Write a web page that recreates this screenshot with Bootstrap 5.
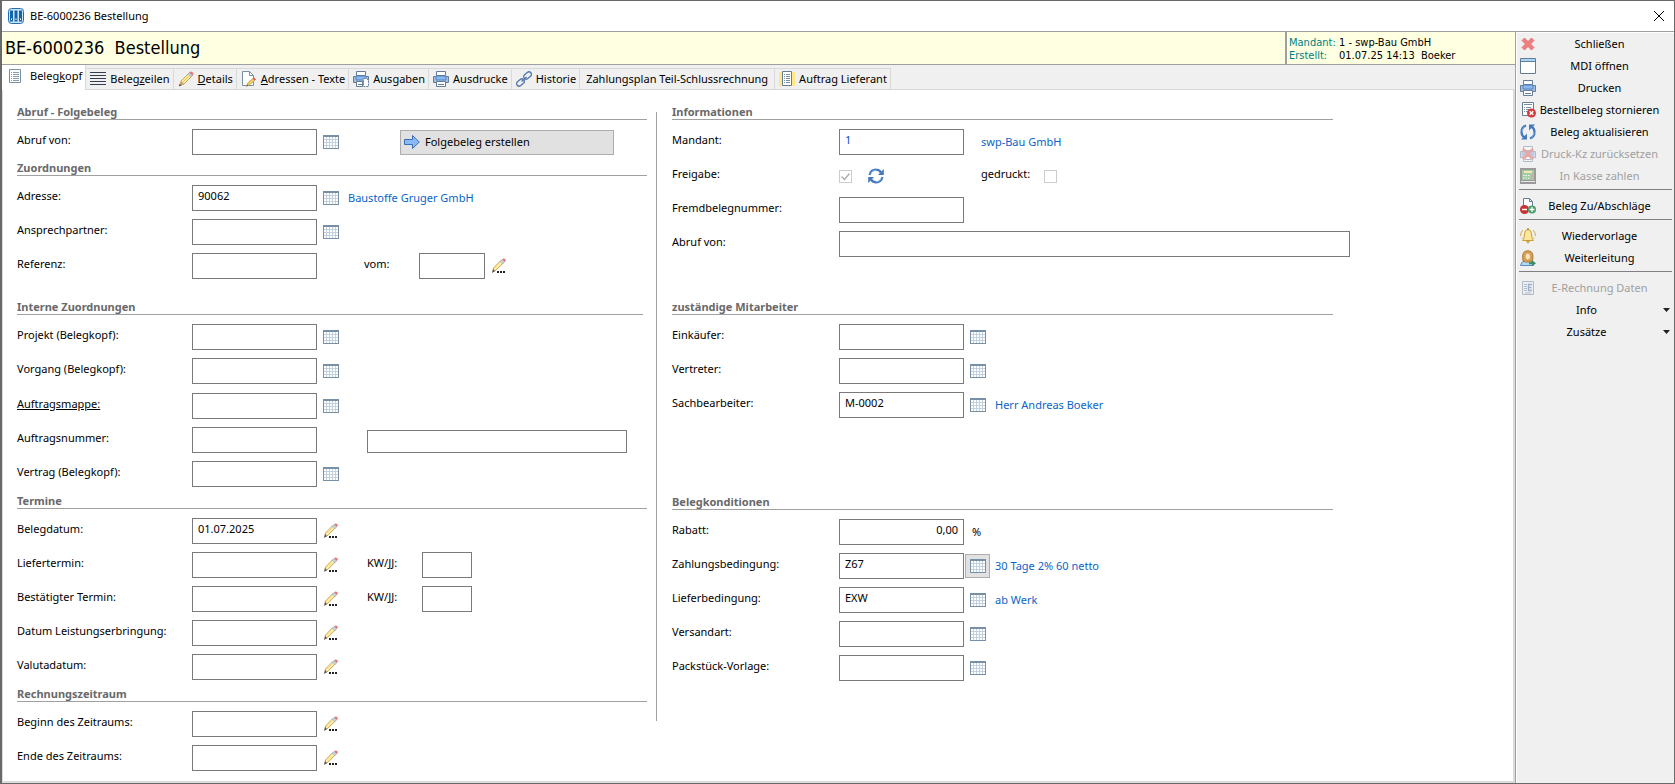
<!DOCTYPE html>
<html lang="de">
<head>
<meta charset="utf-8">
<meta name="viewport" content="width=device-width, initial-scale=1">
<title>BE-6000236 Bestellung</title>
<link rel="stylesheet" href="https://cdn.jsdelivr.net/npm/bootstrap@5.3.0/dist/css/bootstrap.min.css">
<style>
  body { font-family: "Noto Sans", "Open Sans", sans-serif; font-size: 11px; line-height: 16px; color: #000; background: #fff; }
  button { font: inherit; color: inherit; }
  svg { display: block; flex: none; }
  .ic { width: 16px; height: 16px; }
  .window { min-height: 100vh; border: 1px solid #696969; border-left-width: 2px; }
  .titlebar { height: 31px; padding: 0 7px 0 6px; gap: 6px; border-bottom: 1px solid #a0a0a0; }
  .winclose { border: 0; background: none; padding: 0; width: 16px; height: 16px; }
  .dochead { height: 33px; background: #ffffe1; border-bottom: 1px solid #a0a0a0; font-family: "DejaVu Sans Condensed", "DejaVu Sans", sans-serif; }
  .doctitle { font-size: 18px; line-height: 24px; font-weight: 400; padding-left: 3px; white-space: pre; }
  .docinfo { width: 230px; border-left: 2px solid #a0a0a0; padding: 4px 0 0 2px; line-height: 13px; font-size: 11px; }
  .docinfo dt { font-weight: 400; color: #008080; width: 50px; }
  .docinfo dd { white-space: pre; }
  .workarea { border-right: 1px solid #a0a0a0; }
  .tabstrip { background: #f0f0f0; height: 25px; }
  .tabstrip::after { content: ""; flex: 1; align-self: flex-end; border-bottom: 1px solid #d9d9d9; }
  .tabbtn { height: 22px; padding: 0 3px 0 4px; gap: 4px; border: 1px solid #d9d9d9; border-left: 0; background: #f0f0f0; white-space: nowrap; font-size: 11px; }
  .tabbtn.active { height: 25px; background: #fff; border-width: 0 1px 0 0; padding: 0 3px 3px 5px; gap: 7px; }
  .tabbtn.plain { padding: 0 6px; }
  .formpane { border: 1px solid #dcdcdc; border-width: 0 2px 2px 1px; background: #fff; padding: 10px 0 8px 14px; }
  .colleft { flex: 0 1 630px; }
  .divider { width: 1px; margin: 12px 15px 52px 9px; background: #a0a0a0; flex: none; }
  .colright { flex: 0 1 678px; }
  .sect h2 { height: 20px; margin: 0 0 9px; padding-top: 4px; font-size: 11px; line-height: 16px; font-weight: 700; color: #696969; border-bottom: 1px solid #a0a0a0; }
  .colright h2 { margin-right: 17px; }
  .fields { display: grid; gap: 8px; }
  .frow { display: flex; height: 26px; align-items: center; }
  .lab { width: 175px; padding-bottom: 4px; flex: none; white-space: nowrap; }
  .colright .lab { width: 167px; }
  .lab2 { padding-bottom: 4px; flex: none; white-space: nowrap; }
  .vom { margin-left: 47px; width: 55px; }
  .kw { margin-left: 24px; width: 55px; }
  .gedr { margin-left: 93px; width: 63px; }
  .fld { height: 26px; width: 125px; flex: none; border: 1px solid #7a7a7a; border-radius: 0; background: #fff; padding: 0 5px 6px; line-height: 16px; color: #000; }
  .fld.wide { width: auto; flex: 1; }
  .fld.w66 { width: 66px; } .fld.w50 { width: 50px; }
  .fld.mid { width: 260px; height: 23px; margin-left: 50px; align-self: flex-end; }
  .pick { width: 25px; height: 24px; border: 1px solid transparent; background: none; padding: 0; display: grid; place-items: center; margin-left: 1px; flex: none; }
  .pick.pressed { background: #e1e1e1; border-color: #adadad; }
  .pick.renew { margin-left: 11px; }
  .val { color: #0a64c8; text-decoration: none; margin-left: 5px; white-space: nowrap; }
  .val.far { margin-left: 17px; }
  .blue { color: #0a50c8; }
  .folge { width: 214px; height: 25px; background: #e1e1e1; border: 1px solid #adadad; padding: 0 0 0 3px; gap: 5px; margin-left: 57px; }
  .tick { appearance: none; width: 13px; height: 13px; margin: 0; border: 1px solid #ccc; background: #fff; flex: none; }
  .tick:checked { background: #fff url("data:image/svg+xml,%3Csvg xmlns='http://www.w3.org/2000/svg' viewBox='0 0 11 11'%3E%3Cpath d='M1.5 5.5l3 3 5-6' fill='none' stroke='%23aaa' stroke-width='1.2'/%3E%3C/svg%3E"); }
  .cmds { width: 158px; flex: none; background: #f0f0f0; border-top: 1px solid #fff; border-left: 1px solid #fff; padding: 0 2px 0 2px; }
  .cmd { display: flex; align-items: center; width: 100%; height: 22px; border: 0; background: none; padding: 0 9px 0 1px; text-align: center; white-space: nowrap; }
  .cmd span { flex: 1; }
  .cmd:disabled { color: #a0a0a0; }
  .cmd:disabled svg { opacity: .45; }
  .cmd.more { padding: 0 1px; }
  .cmd.more span { padding-right: 10px; }
  .cmds hr { margin: 2px 0 5px; border: 0; border-top: 1px solid #808080; opacity: 1; }
  .gap1 { margin-top: 1px; } .gap2 { margin-top: 2px; } .gap4 { margin-top: 4px; } .gap16 { margin-top: 16px; } .gap38 { margin-top: 38px; } .gap72 { margin-top: 72px; }
</style>
</head>
<body>
<svg width="0" height="0" class="position-absolute" aria-hidden="true">
  <symbol id="i-cal" viewBox="0 0 16 14">
    <path d="M0 0h16v14H0z" fill="#7790a5"/><path d="M1 2h14v11H1z" fill="#c3d1de"/>
    <path d="M1 2h2v2H1zM4 2h2v2H4zM7 2h2v2H7zM10 2h2v2h-2zM13 2h2v2h-2zM1 5h2v2H1zM4 5h2v2H4zM7 5h2v2H7zM10 5h2v2h-2zM13 5h2v2h-2zM1 8h2v2H1zM4 8h2v2H4zM7 8h2v2H7zM10 8h2v2h-2zM13 8h2v2h-2zM1 11h2v2H1zM4 11h2v2H4zM7 11h2v2H7zM10 11h2v2h-2zM13 11h2v2h-2z" fill="#fff"/>
  </symbol>
  <symbol id="i-pen" viewBox="0 0 16 16">
    <path d="M3 10L11 2l3 3-8 8-4 1.500z" fill="#ffe9a0" stroke="#b8943c" stroke-width=".8"/>
    <path d="M4.500 11.500L12 4" stroke="#e8c860" stroke-width="1"/>
    <path d="M10 3l1.500-1.500 3 3L13 6z" fill="#c3d7e8" stroke="#8ba0b4" stroke-width=".5"/>
    <path d="M11.500 1.500L13 .7q2 .6 2.300 2.300l-1 1.500z" fill="#e87878" stroke="#c86464" stroke-width=".4"/>
    <path d="M3 10l-1.500 5L6 13z" fill="#c8a078"/><path d="M1.500 13L1 15.300l2.300-.9z" fill="#333"/>
  </symbol>
  <symbol id="i-pend" viewBox="0 0 16 16">
    <path d="M2.500 10L9.800 2.500l2.700 2.200L5 12.200l-3 1.500z" fill="#ffe9a0" stroke="#b8943c" stroke-width=".8"/>
    <path d="M9.300 3.300L11 1.500l2.700 2.200-1.700 2z" fill="#c3d7e8" stroke="#8ba0b4" stroke-width=".5"/>
    <path d="M11 1.500L12.200.6l2.200.3.300 1.700-1 1.300z" fill="#e87878"/>
    <path d="M2 11l-1 4 3-1.700z" fill="#555"/><path d="M6 13h2v2H6zM9 13h2v2H9zM12 13h2v2h-2z" fill="#222"/>
  </symbol>
  <symbol id="i-doc" viewBox="0 0 16 16">
    <path d="M2.500 1.500h11v13h-11z" fill="#fff" stroke="#7790a5"/>
    <path d="M4 4.500h1m1 0h6M4 6.500h1m1 0h6M4 8.500h1m1 0h6M4 10.500h1m1 0h6M4 12.500h1m1 0h6" stroke="#8a9cae"/>
  </symbol>
  <symbol id="i-lines" viewBox="0 0 16 16"><path d="M0 1.500h16M0 4.500h16M0 7.500h16M0 10.500h16M0 13.500h16" stroke="#333f4c"/></symbol>
  <symbol id="i-note" viewBox="0 0 16 16">
    <path d="M1.500.5h7l4 4v10h-11z" fill="#fff" stroke="#7790a5"/><path d="M8.500.5v4h4" fill="none" stroke="#7790a5"/>
    <path d="M5 15l1.500-4L12 6.500l2.500 2.500L9 13.800z" fill="#fff"/><path d="M5.500 15.200l1.300-3.400 5-4.300 1.800 2-5 4.300z" fill="#f0cc60" stroke="#a88840" stroke-width=".6"/><path d="M11.800 7.500L13 6.400l2 2.200-1.300 1z" fill="#e05050"/><path d="M5.500 15.200l.5-1.500 1 1z" fill="#222"/>
  </symbol>
  <symbol id="i-print" viewBox="0 0 16 16">
    <path d="M.5 5.500h15v6H.5z" fill="#a8bfdd" stroke="#647c94"/><path d="M3.500.5h9v4h-9z" fill="#fff" stroke="#647c94"/><path d="M3 5h10v4H3z" fill="#8ab8f0" stroke="#4678b4" stroke-width=".8"/><path d="M3.500 10.500h9v5h-9z" fill="#fff" stroke="#647c94"/><path d="M5 13.500h6" stroke="#647c94"/>
  </symbol>
  <symbol id="i-printdoc" viewBox="0 0 16 16">
    <path d="M.5 5.500h15v6H.5z" fill="#a8bfdd" stroke="#647c94"/><path d="M3.500.5h9v4h-9z" fill="#fff" stroke="#647c94"/><path d="M3 5h10v4H3z" fill="#8ab8f0" stroke="#4678b4" stroke-width=".8"/><path d="M3.500 10.500h6v5h-6z" fill="#fff" stroke="#647c94"/><path d="M5 13.500h4" stroke="#647c94"/><path d="M10.500 7.500h3l2 2v6h-5z" fill="#fff" stroke="#647c94" stroke-dasharray="2 1"/>
  </symbol>
  <symbol id="i-link" viewBox="0 0 16 16">
    <g fill="none" stroke="#5078aa" stroke-width="1.300"><rect x="7.300" y="2" width="8.500" height="5" rx="2.500" transform="rotate(-40 11.500 4.500)"/><rect x=".2" y="9" width="8.500" height="5" rx="2.500" transform="rotate(-40 4.500 11.500)"/><path d="M5.500 10.500l5-4.500"/></g>
  </symbol>
  <symbol id="i-order" viewBox="0 0 16 16">
    <path d="M0 1h16v14H0z" fill="#ffe88a"/><path d="M3.500.5h9v14h-9z" fill="#fff" stroke="#647c94"/><path d="M5 3.500h1m1 0h4M5 5.500h1m1 0h4M5 7.500h1m1 0h4M5 9.500h1m1 0h4M5 11.500h1m1 0h4" stroke="#7790a5"/>
  </symbol>
  <symbol id="i-arrow" viewBox="0 0 16 16"><path d="M.5 5.500h8v-4L15.300 8l-6.800 6.500v-4h-8z" fill="#8abaf5" stroke="#3c6eb4"/></symbol>
  <symbol id="i-refresh" viewBox="0 0 16 16">
    <g fill="none" stroke="#4678be" stroke-width="2.200"><path d="M1.500 7Q3 1.500 8 1.700q3 0 5 2.800"/><path d="M14.500 9Q13 14.500 8 14.300q-3 0-5-2.800"/></g><path d="M15.800 1v6H10zM.2 15V9H6z" fill="#4678be"/>
    <path d="M2.500 6Q4 2 8 2M13.500 10Q12 14 8 14" fill="none" stroke="#8ab4ec" stroke-width=".8"/>
  </symbol>
  <symbol id="i-sync" viewBox="0 0 16 16">
    <g fill="none" stroke="#4678be" stroke-width="2.200"><path d="M6 1.600Q1.500 3 1.500 8q0 3.500 3 5.500"/><path d="M10 14.400q4.500-1.400 4.500-6.400 0-3.500-3-5.500"/></g><path d="M1 15.500h6v-6zM15 .5H9v6z" fill="#4678be"/>
    <path d="M5 2.500Q2 4 2 8M11 13.500Q14 12 14 8" fill="none" stroke="#8ab4ec" stroke-width=".8"/>
  </symbol>
  <symbol id="i-x" viewBox="0 0 16 16"><path d="M4.500 2L8 5.500 11.500 2 14 4.500 10.500 8l3.500 3.500-2.500 2.500L8 10.500 4.500 14 2 11.500 5.500 8 2 4.500z" fill="#f08080" stroke="#d86464" stroke-width=".7"/></symbol>
  <symbol id="i-win" viewBox="0 0 16 16"><path d="M.5.5h15v15H.5z" fill="#fff" stroke="#647c94"/><path d="M1 1h14v2H1z" fill="#a8d4f8"/><path d="M1 3.500h14" stroke="#647c94"/></symbol>
  <symbol id="i-storno" viewBox="0 0 16 16"><path d="M2.500.5h11v13h-11z" fill="#fff" stroke="#647c94"/><path d="M4 2.500h8M4 5.500h1m1 0h5M4 7.500h1m1 0h3M4 9.500h1m1 0h2" stroke="#7790a5"/><circle cx="11.500" cy="11" r="4.500" fill="#d23c3c"/><path d="M9.700 9.200l3.600 3.600m0-3.600l-3.600 3.600" stroke="#fff" stroke-width="1.400"/></symbol>
  <symbol id="i-printx" viewBox="0 0 16 16"><use href="#i-print"/><path d="M3 3l10 10M13 3L3 13" stroke="#e05050" stroke-width="3"/></symbol>
  <symbol id="i-kasse" viewBox="0 0 16 16"><path d="M0 0h16v16H0z" fill="#333"/><path d="M2 2h12v10H2z" fill="#48a048"/><path d="M4 3h8v2H4z" fill="#f8e060"/><path d="M3 7.500h7M3 10h7" stroke="#fff" stroke-dasharray="1.500 1"/><path d="M11 7.500h2M11 10h2" stroke="#e04040" stroke-width="1.500"/><path d="M1 13.500h14" stroke="#ddd"/></symbol>
  <symbol id="i-zuab" viewBox="0 0 16 16"><path d="M3.500 8V.5h6l3 3V8" fill="#fff" stroke="#647c94"/><path d="M9.500.5v3h3" fill="none" stroke="#647c94"/><circle cx="4.500" cy="11.500" r="4.500" fill="#c83232"/><circle cx="12" cy="11.500" r="4" fill="#4b9b69"/><path d="M2 11.500h5M9.500 11.500h5M12 9v5" stroke="#fff" stroke-width="1.300"/></symbol>
  <symbol id="i-bell" viewBox="0 0 16 16"><path d="M2.500 12.500Q4.500 11 4.500 6q0-4 3.500-4.500Q11.500 2 11.500 6q0 5 2 6.500z" fill="#ffe696" stroke="#c8a03c"/><path d="M6.500 13q.3 2 1.500 2t1.500-2z" fill="#f0c850" stroke="#b48c32" stroke-width=".6"/><path d="M7 1h2" stroke="#b48c32" stroke-width="1.500"/><path d="M2.800 2Q.5 4 .6 8M13.200 2q2.300 2 2.200 6M2 9.500v1M14 9.500v1" fill="none" stroke="#d2aa50"/></symbol>
  <symbol id="i-user" viewBox="0 0 16 16"><path d="M.5 15.500Q1 11.500 5 11h5q3 .5 3.500 4.500z" fill="#b4d7f5" stroke="#5a8cbe"/><path d="M3 11Q1.500 3 5 1.300 8 0 11 1.500 14 4 12.500 11L10 12H5.500z" fill="#dca04b" stroke="#9b6e32" stroke-width=".8"/><ellipse cx="7.800" cy="6.500" rx="2.800" ry="3.500" fill="#ffe1be" stroke="#a57841" stroke-width=".5"/><path d="M9 12.300h3v-2l4 3-4 3v-2H9z" fill="#3c8c64"/></symbol>
  <symbol id="i-erech" viewBox="0 0 16 16"><path d="M2.500 1.500h11v13h-11z" fill="#e6f0fa" stroke="#647c94"/><path d="M4 4.500h3M4 6.500h3M4 8.500h3M4 10.500h3M5 13h6" stroke="#647c94"/><path d="M12 4.500H8.500v6H12M8.500 7.500h3" fill="none" stroke="#3c64a0" stroke-width="1.300"/></symbol>
  <symbol id="i-caret" viewBox="0 0 8 8"><path d="M0 2h7L3.500 6z" fill="#222"/></symbol>
</svg>

<div class="window d-flex flex-column">
  <header class="titlebar d-flex align-items-center">
    <svg width="16" height="16" viewBox="0 0 16 16"><rect x=".5" y=".5" width="15" height="15" rx="3" fill="#cfe4f5" stroke="#1e6eb4"/><path d="M3.500 2.500v11M8 2.500v11M12.500 2.500v11" stroke="#1464aa" stroke-width="3"/><path d="M3.500 10.500v1.500M8 10.500v1.500M12.500 10.500v1.500" stroke="#fff"/></svg>
    <span class="me-auto">BE-6000236 Bestellung</span>
    <button class="winclose" type="button" aria-label="Fenster schließen"><svg class="ic" viewBox="0 0 16 16"><path d="M3 3l10 10M13 3L3 13" stroke="#000"/></svg></button>
  </header>

  <div class="d-flex flex-grow-1">
    <main class="workarea d-flex flex-column flex-grow-1">
      <div class="dochead d-flex">
        <h1 class="doctitle m-0 flex-grow-1 align-self-center">BE-6000236  Bestellung</h1>
        <dl class="docinfo m-0">
          <div class="d-flex"><dt>Mandant:</dt><dd class="m-0">1 - swp-Bau GmbH</dd></div>
          <div class="d-flex"><dt>Erstellt:</dt><dd class="m-0">01.07.25 14:13  Boeker</dd></div>
        </dl>
      </div>

      <div class="tabstrip d-flex align-items-end" role="tablist">
        <button class="tabbtn active d-flex align-items-center" type="button" role="tab" aria-selected="true"><svg class="ic"><use href="#i-doc"/></svg><span>Beleg<u>k</u>opf</span></button>
        <button class="tabbtn d-flex align-items-center" type="button" role="tab"><svg class="ic"><use href="#i-lines"/></svg><span>Beleg<u>z</u>eilen</span></button>
        <button class="tabbtn d-flex align-items-center" type="button" role="tab"><svg class="ic"><use href="#i-pen"/></svg><span><u>D</u>etails</span></button>
        <button class="tabbtn d-flex align-items-center" type="button" role="tab"><svg class="ic"><use href="#i-note"/></svg><span><u>A</u>dressen - Texte</span></button>
        <button class="tabbtn d-flex align-items-center" type="button" role="tab"><svg class="ic"><use href="#i-printdoc"/></svg><span>Ausgaben</span></button>
        <button class="tabbtn d-flex align-items-center" type="button" role="tab"><svg class="ic"><use href="#i-print"/></svg><span>Ausdrucke</span></button>
        <button class="tabbtn d-flex align-items-center" type="button" role="tab"><svg class="ic"><use href="#i-link"/></svg><span>Historie</span></button>
        <button class="tabbtn plain d-flex align-items-center" type="button" role="tab"><span>Zahlungsplan Teil-Schlussrechnung</span></button>
        <button class="tabbtn d-flex align-items-center" type="button" role="tab"><svg class="ic"><use href="#i-order"/></svg><span>Auftrag Lieferant</span></button>
      </div>

      <form class="formpane d-flex flex-grow-1">
        <div class="colleft">
          <section class="sect">
            <h2>Abruf - Folgebeleg</h2>
            <div class="fields">
              <div class="frow"><label class="lab" for="abruf">Abruf von:</label><input class="fld" id="abruf"><button class="pick" type="button" aria-label="Abruf wählen"><svg width="16" height="14"><use href="#i-cal"/></svg></button>
                <button class="folge d-flex align-items-center" type="button"><svg class="ic"><use href="#i-arrow"/></svg>Folgebeleg erstellen</button></div>
            </div>
          </section>
          <section class="sect gap1">
            <h2>Zuordnungen</h2>
            <div class="fields">
              <div class="frow"><label class="lab" for="adresse">Adresse:</label><input class="fld" id="adresse" value="90062"><button class="pick" type="button" aria-label="Adresse wählen"><svg width="16" height="14"><use href="#i-cal"/></svg></button><a class="val" href="#">Baustoffe Gruger GmbH</a></div>
              <div class="frow"><label class="lab" for="anspr">Ansprechpartner:</label><input class="fld" id="anspr"><button class="pick" type="button" aria-label="Ansprechpartner wählen"><svg width="16" height="14"><use href="#i-cal"/></svg></button></div>
              <div class="frow"><label class="lab" for="ref">Referenz:</label><input class="fld" id="ref"><label class="lab2 vom" for="vom">vom:</label><input class="fld w66" id="vom"><button class="pick" type="button" aria-label="Datum wählen"><svg class="ic"><use href="#i-pend"/></svg></button></div>
            </div>
          </section>
          <section class="sect gap16">
            <h2 class="me-1">Interne Zuordnungen</h2>
            <div class="fields">
              <div class="frow"><label class="lab" for="projekt">Projekt (Belegkopf):</label><input class="fld" id="projekt"><button class="pick" type="button" aria-label="Projekt wählen"><svg width="16" height="14"><use href="#i-cal"/></svg></button></div>
              <div class="frow"><label class="lab" for="vorgang">Vorgang (Belegkopf):</label><input class="fld" id="vorgang"><button class="pick" type="button" aria-label="Vorgang wählen"><svg width="16" height="14"><use href="#i-cal"/></svg></button></div>
              <div class="frow gap1"><label class="lab text-decoration-underline" for="mappe">Auftragsmappe:</label><input class="fld" id="mappe"><button class="pick" type="button" aria-label="Auftragsmappe wählen"><svg width="16" height="14"><use href="#i-cal"/></svg></button></div>
              <div class="frow"><label class="lab" for="anr">Auftragsnummer:</label><input class="fld" id="anr"><input class="fld mid" aria-label="Auftragsbezeichnung"></div>
              <div class="frow"><label class="lab" for="vertrag">Vertrag (Belegkopf):</label><input class="fld" id="vertrag"><button class="pick" type="button" aria-label="Vertrag wählen"><svg width="16" height="14"><use href="#i-cal"/></svg></button></div>
            </div>
          </section>
          <section class="sect gap2">
            <h2>Termine</h2>
            <div class="fields">
              <div class="frow"><label class="lab" for="bdat">Belegdatum:</label><input class="fld" id="bdat" value="01.07.2025"><button class="pick" type="button" aria-label="Datum wählen"><svg class="ic"><use href="#i-pend"/></svg></button></div>
              <div class="frow"><label class="lab" for="ldat">Liefertermin:</label><input class="fld" id="ldat"><button class="pick" type="button" aria-label="Datum wählen"><svg class="ic"><use href="#i-pend"/></svg></button><label class="lab2 kw" for="kw1">KW/JJ:</label><input class="fld w50" id="kw1"></div>
              <div class="frow"><label class="lab" for="best">Bestätigter Termin:</label><input class="fld" id="best"><button class="pick" type="button" aria-label="Datum wählen"><svg class="ic"><use href="#i-pend"/></svg></button><label class="lab2 kw" for="kw2">KW/JJ:</label><input class="fld w50" id="kw2"></div>
              <div class="frow"><label class="lab" for="leist">Datum Leistungserbringung:</label><input class="fld" id="leist"><button class="pick" type="button" aria-label="Datum wählen"><svg class="ic"><use href="#i-pend"/></svg></button></div>
              <div class="frow"><label class="lab" for="valuta">Valutadatum:</label><input class="fld" id="valuta"><button class="pick" type="button" aria-label="Datum wählen"><svg class="ic"><use href="#i-pend"/></svg></button></div>
            </div>
          </section>
          <section class="sect gap2">
            <h2>Rechnungszeitraum</h2>
            <div class="fields">
              <div class="frow"><label class="lab" for="beginn">Beginn des Zeitraums:</label><input class="fld" id="beginn"><button class="pick" type="button" aria-label="Datum wählen"><svg class="ic"><use href="#i-pend"/></svg></button></div>
              <div class="frow"><label class="lab" for="ende">Ende des Zeitraums:</label><input class="fld" id="ende"><button class="pick" type="button" aria-label="Datum wählen"><svg class="ic"><use href="#i-pend"/></svg></button></div>
            </div>
          </section>
        </div>
        <div class="divider"></div>

        <div class="colright">
          <section class="sect">
            <h2>Informationen</h2>
            <div class="fields">
              <div class="frow"><label class="lab" for="mandant">Mandant:</label><input class="fld blue" id="mandant" value="1"><a class="val far" href="#">swp-Bau GmbH</a></div>
              <div class="frow"><label class="lab" for="frei">Freigabe:</label><input class="tick" type="checkbox" id="frei" checked disabled><button class="pick renew" type="button" aria-label="Freigabe aktualisieren"><svg class="ic"><use href="#i-refresh"/></svg></button><label class="lab2 gedr" for="gedr">gedruckt:</label><input class="tick" type="checkbox" id="gedr" disabled></div>
              <div class="frow"><label class="lab" for="fremd">Fremdbelegnummer:</label><input class="fld" id="fremd"></div>
              <div class="frow"><label class="lab" for="abruf2">Abruf von:</label><input class="fld wide" id="abruf2"></div>
            </div>
          </section>
          <section class="sect gap38">
            <h2>zuständige Mitarbeiter</h2>
            <div class="fields">
              <div class="frow"><label class="lab" for="eink">Einkäufer:</label><input class="fld" id="eink"><button class="pick" type="button" aria-label="Einkäufer wählen"><svg width="16" height="14"><use href="#i-cal"/></svg></button></div>
              <div class="frow"><label class="lab" for="vertr">Vertreter:</label><input class="fld" id="vertr"><button class="pick" type="button" aria-label="Vertreter wählen"><svg width="16" height="14"><use href="#i-cal"/></svg></button></div>
              <div class="frow"><label class="lab" for="sachb">Sachbearbeiter:</label><input class="fld" id="sachb" value="M-0002"><button class="pick" type="button" aria-label="Sachbearbeiter wählen"><svg width="16" height="14"><use href="#i-cal"/></svg></button><a class="val" href="#">Herr Andreas Boeker</a></div>
            </div>
          </section>
          <section class="sect gap72">
            <h2>Belegkonditionen</h2>
            <div class="fields">
              <div class="frow"><label class="lab" for="rabatt">Rabatt:</label><input class="fld text-end" id="rabatt" value="0,00"><span class="ms-2">%</span></div>
              <div class="frow"><label class="lab" for="zahl">Zahlungsbedingung:</label><input class="fld" id="zahl" value="Z67"><button class="pick pressed" type="button" aria-label="Zahlungsbedingung wählen"><svg width="16" height="14"><use href="#i-cal"/></svg></button><a class="val" href="#">30 Tage 2% 60 netto</a></div>
              <div class="frow"><label class="lab" for="lief">Lieferbedingung:</label><input class="fld" id="lief" value="EXW"><button class="pick" type="button" aria-label="Lieferbedingung wählen"><svg width="16" height="14"><use href="#i-cal"/></svg></button><a class="val" href="#">ab Werk</a></div>
              <div class="frow"><label class="lab" for="vers">Versandart:</label><input class="fld" id="vers"><button class="pick" type="button" aria-label="Versandart wählen"><svg width="16" height="14"><use href="#i-cal"/></svg></button></div>
              <div class="frow"><label class="lab" for="pack">Packstück-Vorlage:</label><input class="fld" id="pack"><button class="pick" type="button" aria-label="Vorlage wählen"><svg width="16" height="14"><use href="#i-cal"/></svg></button></div>
            </div>
          </section>
        </div>
      </form>
    </main>

    <aside class="cmds">
      <button class="cmd" type="button"><svg class="ic"><use href="#i-x"/></svg><span>Schließen</span></button>
      <button class="cmd" type="button"><svg class="ic"><use href="#i-win"/></svg><span>MDI öffnen</span></button>
      <button class="cmd" type="button"><svg class="ic"><use href="#i-print"/></svg><span>Drucken</span></button>
      <button class="cmd" type="button"><svg class="ic"><use href="#i-storno"/></svg><span>Bestellbeleg stornieren</span></button>
      <button class="cmd" type="button"><svg class="ic"><use href="#i-sync"/></svg><span>Beleg aktualisieren</span></button>
      <button class="cmd" type="button" disabled><svg class="ic"><use href="#i-printx"/></svg><span>Druck-Kz zurücksetzen</span></button>
      <button class="cmd" type="button" disabled><svg class="ic"><use href="#i-kasse"/></svg><span>In Kasse zahlen</span></button>
      <hr>
      <button class="cmd" type="button"><svg class="ic"><use href="#i-zuab"/></svg><span>Beleg Zu/Abschläge</span></button>
      <hr>
      <button class="cmd" type="button"><svg class="ic"><use href="#i-bell"/></svg><span>Wiedervorlage</span></button>
      <button class="cmd" type="button"><svg class="ic"><use href="#i-user"/></svg><span>Weiterleitung</span></button>
      <hr>
      <button class="cmd" type="button" disabled><svg class="ic"><use href="#i-erech"/></svg><span>E-Rechnung Daten</span></button>
      <button class="cmd more" type="button"><span>Info</span><svg width="8" height="8"><use href="#i-caret"/></svg></button>
      <button class="cmd more" type="button"><span>Zusätze</span><svg width="8" height="8"><use href="#i-caret"/></svg></button>
    </aside>
  </div>
</div>
<script src="https://cdn.jsdelivr.net/npm/bootstrap@5.3.0/dist/js/bootstrap.bundle.min.js"></script>
</body>
</html>
